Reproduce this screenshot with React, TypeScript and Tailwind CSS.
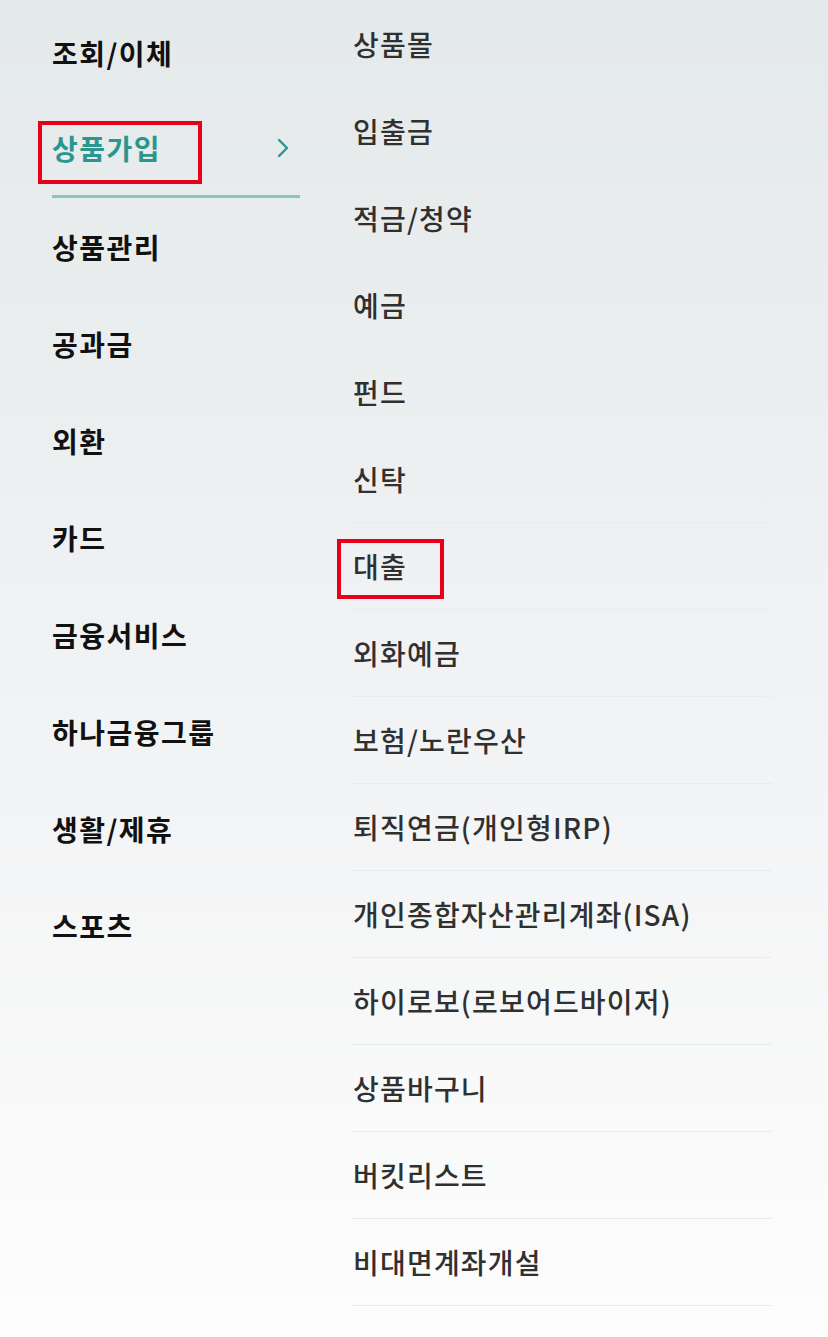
import React from "react";

const left = ["조회/이체", "상품가입", "상품관리", "공과금", "외환", "카드", "금융서비스", "하나금융그룹", "생활/제휴", "스포츠"];
const right = [
  "상품몰",
  "입출금",
  "적금/청약",
  "예금",
  "펀드",
  "신탁",
  "대출",
  "외화예금",
  "보험/노란우산",
  "퇴직연금(개인형IRP)",
  "개인종합자산관리계좌(ISA)",
  "하이로보(로보어드바이저)",
  "상품바구니",
  "버킷리스트",
  "비대면계좌개설",
];

export default function App() {
  return (
    <div
      className="relative w-[828px] h-[1337px] overflow-hidden bg-gradient-to-b from-[#e4e9ea] via-[#f3f4f5] via-60% to-[#fdfdfd]"
      style={{ fontFamily: '"Noto Sans CJK KR", "Noto Sans", sans-serif' }}
    >
      <div className="flex">
        <div className="w-[352px] pl-[52px] pr-[52px] pt-[4px] flex flex-col">
          {left.map((t, i) =>
            i === 1 ? (
              <div key={t} className="relative h-[97px] flex items-center justify-between border-b-[3px] border-[#86c8b5]">
                <span className="text-[28px] font-bold text-[#2b958f] tracking-[1.5px] leading-none">{t}</span>
                <svg width="14" height="22" viewBox="0 0 14 22" className="mr-[10px]" fill="none">
                  <path d="M3 3 L11 11 L3 19" stroke="#2b958f" strokeWidth="2.4" strokeLinecap="round" strokeLinejoin="round" />
                </svg>
                <div className="absolute left-[-14px] top-[20px] w-[164px] h-[63px] border-[4px] border-[#e8001b]" />
              </div>
            ) : (
              <div key={t} className="h-[97px] flex items-center">
                <span className="text-[28px] font-bold text-[#111111] tracking-[1.5px] leading-none">{t}</span>
              </div>
            )
          )}
        </div>
        <div className="w-[420px] pt-[1px] flex flex-col">
          {right.map((t) => (
            <div key={t} className="relative h-[87px] flex items-center border-b border-[#e9ecee] pl-[1px]">
              <span className="text-[28px] font-medium text-[#303030] tracking-[1.2px] leading-none">{t}</span>
              {t === "대출" && (
                <div className="absolute left-[-15px] top-[16px] w-[107px] h-[60px] border-[4px] border-[#e8001b]" />
              )}
            </div>
          ))}
        </div>
      </div>
    </div>
  );
}
